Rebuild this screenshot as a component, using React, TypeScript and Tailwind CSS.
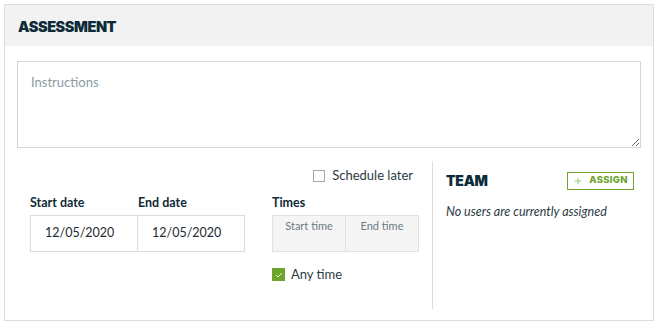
import { Plus } from 'lucide-react';

const body = { fontFamily: 'Lato, "Open Sans", sans-serif' };
const heading = { fontFamily: 'Inter, "Liberation Sans", sans-serif' };

function DateField({ label, value, first }: { label: string; value: string; first?: boolean }) {
  return (
    <div className={first ? 'w-[108px]' : 'w-[107px]'}>
      <div className="text-[12.5px] font-bold text-[#0f2a36] leading-none mb-[6px]" style={body}>
        {label}
      </div>
      <div
        className={`h-[37px] flex items-center pl-[14px] text-[12.5px] text-[#1d2b33] border-y border-[#dcdcdc] ${
          first ? 'border-l border-r' : 'border-r'
        }`}
        style={body}
      >
        {value}
      </div>
    </div>
  );
}

export default function App() {
  return (
    <div className="bg-white w-[659px] h-[325px] p-[4px]">
      <div className="w-[650px] h-[317px] border border-[#dcdcdc] flex flex-col">
        {/* header */}
        <div className="h-[41px] bg-[#f2f2f2] flex items-center pl-[13px] pt-[2px] shrink-0">
          <h1 className="text-[14.5px] font-black tracking-[-0.03em] text-[#0d2a38]" style={heading}>
            ASSESSMENT
          </h1>
        </div>

        <div className="flex-1 px-[12px] pt-[15px] pb-[11px] flex flex-col">
          <textarea
            placeholder="Instructions"
            className="w-full h-[87px] shrink-0 border border-[#d5d5d5] px-[13px] py-[11px] text-[13px] text-[#1d2b33] placeholder:text-[#8c9ba3] outline-none"
            style={body}
          />

          <div className="flex flex-1 mt-[13px]">
            {/* schedule column */}
            <div className="w-[415px] pr-[13px] flex flex-col">
              <label className="flex items-center justify-end gap-[7px] pt-[5px] pr-[6px] text-[13px] text-[#2b3a42]" style={body}>
                <span className="w-[12px] h-[12px] border border-[#a8a8a8] bg-white" />
                Schedule later
              </label>

              <div className="flex mt-[11px] pl-[13px]">
                <div className="flex">
                  <DateField label="Start date" value="12/05/2020" first />
                  <DateField label="End date" value="12/05/2020" />
                </div>

                <div className="ml-[27px] w-[147px]">
                  <div className="text-[12.5px] font-bold text-[#0f2a36] leading-none mb-[6px]" style={body}>
                    Times
                  </div>
                  <div className="h-[37px] flex border border-[#e2e2e2] bg-[#f5f5f5]">
                    <div className="w-[73px] border-r border-[#e2e2e2] text-center pt-[2px] text-[11px] text-[#6b7b83]" style={body}>
                      Start time
                    </div>
                    <div className="flex-1 text-center pt-[2px] text-[11px] text-[#6b7b83]" style={body}>
                      End time
                    </div>
                  </div>
                  <label className="flex items-center gap-[6px] mt-[13px] text-[13px] text-[#2b3a42]" style={body}>
                    <span className="w-[13px] h-[13px] bg-[#6ca42c] flex items-center justify-center">
                      <svg width="8" height="6" viewBox="0 0 8 6" fill="none">
                        <path d="M1 3l2 2 4-4" stroke="#e6f2d8" strokeWidth="1" />
                      </svg>
                    </span>
                    Any time
                  </label>
                </div>
              </div>
            </div>

            {/* team column */}
            <div className="flex-1 border-l border-[#dcdcdc] pl-[13px] pr-[7px] pt-[9px]">
              <div className="flex items-center justify-between">
                <h2 className="text-[14px] font-black tracking-[-0.02em] text-[#0d2a38]" style={heading}>
                  TEAM
                </h2>
                <button className="h-[18px] w-[67px] border border-[#6ca42c] flex items-center justify-center gap-[6px] text-[9.5px] font-extrabold tracking-[0.03em] text-[#6ca42c]" style={heading}>
                  <Plus size={10} strokeWidth={1.5} />
                  ASSIGN
                </button>
              </div>
              <p className="mt-[12px] text-[12.5px] italic text-[#2b3a42]" style={body}>
                No users are currently assigned
              </p>
            </div>
          </div>
        </div>
      </div>
    </div>
  );
}
